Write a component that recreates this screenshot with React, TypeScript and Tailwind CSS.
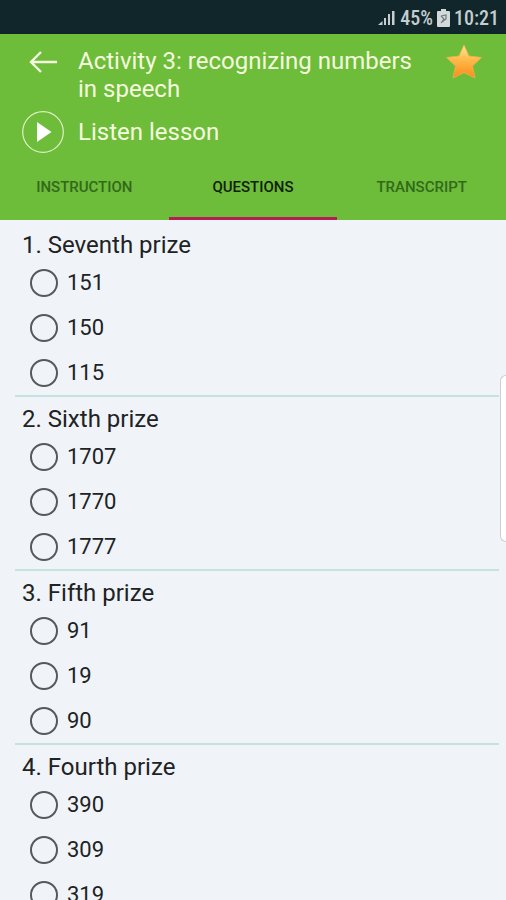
import React, { useState } from "react";

const tabs = ["Instruction", "Questions", "Transcript"];

const questions = [
  { title: "Seventh prize", options: ["151", "150", "115"] },
  { title: "Sixth prize", options: ["1707", "1770", "1777"] },
  { title: "Fifth prize", options: ["91", "19", "90"] },
  { title: "Fourth prize", options: ["390", "309", "319"] },
];

const StatusBar = () => (
  <div className="flex h-[34px] shrink-0 items-center justify-end bg-[#10262b] pt-0.5 pr-[7px] font-['Roboto_Condensed',Roboto,sans-serif] text-xl font-medium text-[#c5cdcf]">
    <svg className="mr-1 h-4 w-[18px]" viewBox="0 0 18 16" fill="currentColor" aria-hidden="true">
      <path d="M0 15 L4.500 11 V15 Z" />
      <rect x="6" y="8" width="2" height="7" />
      <rect x="10" y="4" width="2" height="11" />
      <rect x="14" y="1" width="2.500" height="14" />
    </svg>
    <span>45%</span>
    <svg className="mx-1 h-[18px] w-[13px]" viewBox="0 0 13 18" aria-hidden="true">
      <path d="M4 0 H9 V2 H12 Q13 2 13 3 V17 Q13 18 12 18 H1 Q0 18 0 17 V3 Q0 2 1 2 H4 Z" fill="#d3d9da" />
      <path d="M4 7 L9 6 L9 10 L5 13 M4 7 L7 10 L4 14" fill="none" stroke="#6d7b7f" strokeWidth="1.2" />
    </svg>
    <span>10:21</span>
  </div>
);

const Header = ({ active, onChange }: { active: string; onChange: (tab: string) => void }) => {
  const [favorite, setFavorite] = useState(true);

  return (
    <header className="shrink-0 bg-[#6dbc3a]">
      <div className="flex items-start pt-[13px] pr-5 pl-[22px] text-[#f5fbdf]">
        <button type="button" aria-label="Back" className="flex h-[30px] w-[42px] shrink-0 items-center justify-center">
          <svg className="h-6 w-7" viewBox="0 0 28 24" fill="none" stroke="currentColor" strokeWidth="2.4" aria-hidden="true">
            <path d="M12 2 L2 12 L12 22 M2 12 H28" />
          </svg>
        </button>
        <h1 className="ml-[14px] flex-1 text-2xl leading-7">Activity 3: recognizing numbers in speech</h1>
        <button
          type="button"
          aria-label="Favorite"
          aria-pressed={favorite}
          onClick={() => setFavorite(!favorite)}
          className="ml-4 flex h-[30px] shrink-0 items-center"
        >
          <svg className="h-9 w-11" viewBox="0 0 44 36" aria-hidden="true">
            <defs>
              <linearGradient id="star" x1="0" y1="0" x2="0" y2="1">
                <stop offset="0" stopColor="#ffe79a" />
                <stop offset="0.45" stopColor="#ffb94a" />
                <stop offset="1" stopColor="#fb8b1c" />
              </linearGradient>
            </defs>
            <path
              d="M22 1 L27 12 L39.500 13.500 L30.500 22 L33 34 L22 28.500 L11 34 L13.500 22 L4.500 13.500 L17 12 Z"
              fill={favorite ? "url(#star)" : "none"}
              stroke="#f0b04a"
              strokeWidth="0.8"
              strokeLinejoin="round"
            />
          </svg>
        </button>
      </div>
      <button type="button" className="mt-2 ml-[22px] flex items-center text-2xl text-[#f5fbdf]">
        <svg className="h-[42px] w-[42px]" viewBox="0 0 42 42" aria-hidden="true">
          <circle cx="21" cy="21" r="20.300" fill="none" stroke="#dff0c8" strokeWidth="1.2" />
          <path d="M15 11 L29.500 21 L15 31 Z" fill="#fff" />
        </svg>
        <span className="ml-[14px]">Listen lesson</span>
      </button>
      <div className="mt-1 grid grid-cols-3" role="tablist">
        {tabs.map((tab) => (
          <button
            key={tab}
            type="button"
            role="tab"
            aria-selected={tab === active}
            onClick={() => onChange(tab)}
            className={
              tab === active
                ? "h-[63px] border-b-[3px] border-[#b51e55] text-[15px] font-medium text-[#10200a] uppercase"
                : "h-[63px] border-b-[3px] border-transparent text-[15px] font-medium text-[#32691a] uppercase"
            }
          >
            {tab}
          </button>
        ))}
      </div>
    </header>
  );
};

const App = () => {
  const [active, setActive] = useState("Questions");

  return (
    <div className="relative flex h-screen flex-col overflow-hidden bg-[#f0f4f8] font-[Roboto,sans-serif]">
      <StatusBar />
      <Header active={active} onChange={setActive} />
      <main className="flex-1 overflow-y-auto pt-[3px] pr-[7px] pl-[15px] text-[#202224] [scrollbar-width:none]">
        {questions.map((question, i) => (
          <fieldset key={question.title} className="border-b-2 border-[#c5e2e3] pl-[7px]">
            <legend className="h-[37px] pt-2 text-2xl leading-7">
              {i + 1}. {question.title}
            </legend>
            {question.options.map((option) => (
              <label key={option} className="flex h-[45px] items-center pl-2 text-[22px]">
                <input
                  type="radio"
                  name={`question-${i}`}
                  value={option}
                  className="mr-[9px] h-7 w-7 appearance-none rounded-full border-2 border-[#56585b] checked:border-8"
                />
                {option}
              </label>
            ))}
          </fieldset>
        ))}
      </main>
      {/* edge panel handle */}
      <div className="absolute top-[375px] right-0 h-[167px] w-[6px] rounded-l-md border border-r-0 border-[#cfcfd0] bg-white" />
    </div>
  );
};

export default App;
